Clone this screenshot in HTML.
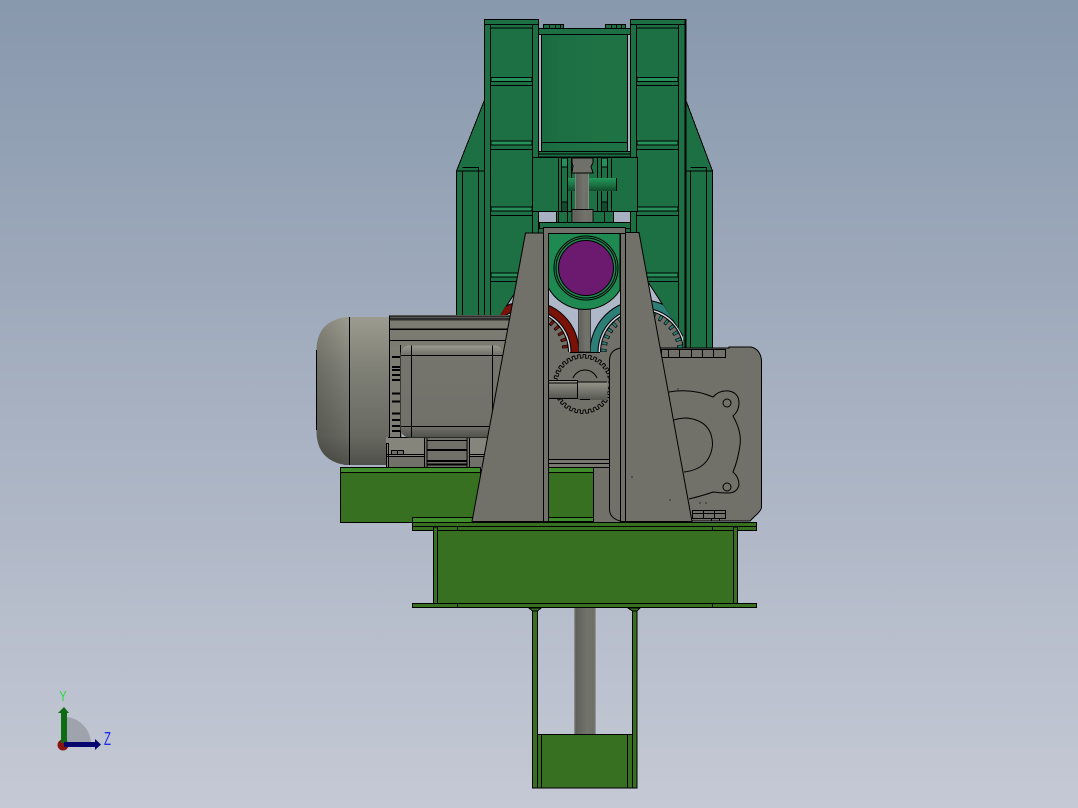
<!DOCTYPE html>
<html><head><meta charset="utf-8"><style>
html,body{margin:0;padding:0;width:1078px;height:808px;overflow:hidden;background:#a5aebf}
svg{display:block}
.k{stroke:#000;stroke-width:1;fill:none}
.g{fill:#1d7043;stroke:#000;stroke-width:1}
.l{fill:#25905a;stroke:#000;stroke-width:1}
.b{fill:#387022;stroke:#000;stroke-width:1.2}
.bl{fill:#3f8c2a;stroke:#000;stroke-width:1}
.s{fill:#71716a;stroke:#000;stroke-width:1}
text{font-family:"Liberation Sans",sans-serif}
</style></head><body>
<svg width="1078" height="808" viewBox="0 0 1078 808" xmlns="http://www.w3.org/2000/svg">
<defs>
<linearGradient id="bg" x1="0" y1="0" x2="0" y2="1"><stop offset="0" stop-color="#8898ad"/><stop offset="1" stop-color="#c5c9d5"/></linearGradient>
<linearGradient id="shaft" x1="0" y1="0" x2="1" y2="0"><stop offset="0" stop-color="#9a9c9c"/><stop offset=".08" stop-color="#5f605a"/><stop offset=".6" stop-color="#72736b"/><stop offset=".93" stop-color="#6e6f68"/><stop offset="1" stop-color="#a4a7ac"/></linearGradient>
<linearGradient id="hsh" x1="0" y1="0" x2="0" y2="1"><stop offset="0" stop-color="#95958a"/><stop offset=".5" stop-color="#75766e"/><stop offset="1" stop-color="#55564f"/></linearGradient>
<linearGradient id="fan" x1="0" y1="0" x2="0" y2="1"><stop offset="0" stop-color="#9c9b8f"/><stop offset=".35" stop-color="#7f8076"/><stop offset=".8" stop-color="#686961"/><stop offset="1" stop-color="#4f504a"/></linearGradient>
<linearGradient id="fanl" x1="0" y1="0" x2="1" y2="0"><stop offset="0" stop-color="#000" stop-opacity=".16"/><stop offset=".45" stop-color="#000" stop-opacity="0"/></linearGradient>
<linearGradient id="box" x1="0" y1="0" x2="0" y2="1"><stop offset="0" stop-color="#9a9a8e"/><stop offset=".09" stop-color="#75756e"/><stop offset=".88" stop-color="#71716a"/><stop offset="1" stop-color="#4f504a"/></linearGradient>
<linearGradient id="cyl" x1="0" y1="0" x2="1" y2="0"><stop offset="0" stop-color="#1a6a3e"/><stop offset=".25" stop-color="#1d7043"/><stop offset="1" stop-color="#1e7345"/></linearGradient>
<linearGradient id="pin" x1="0" y1="0" x2="0" y2="1"><stop offset="0" stop-color="#239a5a"/><stop offset=".55" stop-color="#1c7042"/><stop offset="1" stop-color="#0f4a2b"/></linearGradient>
<clipPath id="sk"><polygon points="522,282 487,335 487,352 683,352 683,335 648,282"/></clipPath>
</defs>
<rect width="1078" height="808" fill="url(#bg)"/>

<!-- wings and back wall -->
<g shape-rendering="crispEdges">
<polygon class="g" points="484.500,100 456.500,171 456.500,340 712.500,349.500 712.500,171 686.500,102"/>
<path class="k" d="M462.500 171V340M478.500 171V340M462.500 167.500H478.500V171M690.500 171V349M706.500 171V349M690.500 167.500H706.500V171M456.500 171H484M686 171H712.500"/>
<!-- columns -->
<rect class="g" x="484.500" y="19.500" width="54" height="330"/>
<rect class="g" x="630.500" y="19.500" width="55" height="330"/>
<path class="k" d="M484.500 24.500H538.500M630.500 24.500H685.500M490.500 24.500V350M532.500 24.500V350M636.500 24.500V350M678.500 24.500V350"/>
<path stroke="#000" stroke-width="2" d="M685.500 19V350" fill="none"/>
<!-- cross bars -->
<path class="k" d="M491 28H532M637 28H678"/>
<rect class="l" x="491" y="77.500" width="41" height="4"/><path class="k" d="M491 85.500H532"/>
<rect class="l" x="491" y="141" width="41" height="4"/><path class="k" d="M491 149.500H532"/>
<rect class="l" x="491" y="207" width="41" height="4"/><path class="k" d="M491 215.500H532"/>
<rect class="l" x="491" y="273" width="41" height="4"/><path class="k" d="M491 281.500H532"/>
<rect class="l" x="637" y="77.500" width="41" height="4"/><path class="k" d="M637 85.500H678"/>
<rect class="l" x="637" y="141" width="41" height="4"/><path class="k" d="M637 149.500H678"/>
<rect class="l" x="637" y="207" width="41" height="4"/><path class="k" d="M637 215.500H678"/>
<rect class="l" x="637" y="273" width="41" height="4"/><path class="k" d="M637 281.500H678"/>
<!-- top bolts -->
<rect class="g" x="543.500" y="24.500" width="20" height="4"/><rect class="g" x="605.500" y="24.500" width="20" height="4"/>
<path class="k" d="M549.500 24.500V28M555.500 24.500V28M560.500 24.500V28M611.500 24.500V28M616.500 24.500V28M621.500 24.500V28"/>
<!-- centre cylinder -->
<rect x="539" y="34" width="91" height="120" fill="#a9b3c2"/>
<rect x="541" y="34" width="87" height="118" fill="url(#cyl)"/>
<path class="k" d="M541.500 34V151M627.500 34V151M541 142.500H628"/>
<rect class="g" x="538.500" y="28.500" width="92" height="6"/>
<rect class="g" x="538.500" y="151.500" width="92" height="5.500"/>
<path class="k" d="M538.500 154H630.500"/>
<!-- clevis -->
<rect class="g" x="532.500" y="157.500" width="105" height="54"/>
<path class="k" d="M558.500 157.500V211M561.500 157.500V211M611.500 157.500V211M597.500 157.500V211"/>
<rect class="l" x="561.500" y="158" width="6" height="9"/>
<rect class="g" x="561.500" y="167" width="6" height="35"/>
<rect x="561.500" y="202" width="6" height="9.500" fill="#124e2e" stroke="#000"/>
<rect class="l" x="601.500" y="158" width="6" height="9"/>
<rect class="g" x="601.500" y="167" width="6" height="35"/>
<rect x="601.500" y="202" width="6" height="9.500" fill="#124e2e" stroke="#000"/>
<path class="k" d="M571.500 158V211"/>
<rect x="568" y="178" width="49" height="13" fill="url(#pin)"/>
<path class="k" d="M616.500 178V191"/>
<rect x="575" y="173" width="14" height="37" fill="url(#shaft)"/>
<path d="M572 158H593V163L591 166.500L593 173H572L573 166L572 163Z" fill="#6f706a" stroke="#000"/>
<path d="M572 157.500H593" stroke="#000" stroke-width="2"/>
<rect x="572" y="209.500" width="21" height="20" fill="url(#shaft)" stroke="#000"/>
<!-- gap below clevis -->
<rect x="539" y="212" width="17.500" height="10" fill="#a7b1c1"/>
<rect x="613.500" y="212" width="17" height="10" fill="#a7b1c1"/>
<path class="k" d="M556.500 211V222M558.500 211V222M567.500 211V222M604.500 211V222M613.500 211V222M538.500 211V222M630.500 211V222"/>
<rect class="g" x="539.500" y="222.500" width="91" height="6"/>
</g>

<!-- sky wedge behind gears -->
<polygon points="522,282 487,335 487,352 683,352 683,335 648,282" fill="#aeb8c8"/>
<path class="k" d="M648 282L683 336M522 282L487 336"/>

<!-- ring gears -->
<g clip-path="url(#sk)">
<circle cx="528" cy="352" r="41.500" fill="#71716a"/>
<circle cx="528" cy="352" r="47" fill="none" stroke="#7a1208" stroke-width="8"/>
<circle cx="528" cy="352" r="51" class="k"/><circle cx="528" cy="352" r="43" class="k"/>
<circle cx="528" cy="352" r="41.500" fill="none" stroke="#d5d9e0" stroke-width="1.200"/>
<circle cx="528" cy="352" r="40.500" class="k" stroke-width=".8"/>
<circle cx="528" cy="352" r="37.500" fill="none" stroke="#000" stroke-width="6" stroke-dasharray="4.500 5.500" pathLength="340"/>
<circle cx="528" cy="352" r="37.500" fill="none" stroke="#7a1208" stroke-width="4.500" stroke-dasharray="3 7" stroke-dashoffset="-.75" pathLength="340"/>
<circle cx="642" cy="352" r="41.500" fill="#71716a"/>
<circle cx="642" cy="352" r="48" fill="none" stroke="#2c7e76" stroke-width="8"/>
<circle cx="642" cy="352" r="52" class="k"/><circle cx="642" cy="352" r="44" class="k"/>
<circle cx="642" cy="352" r="42.500" fill="none" stroke="#d5d9e0" stroke-width="1.200"/>
<circle cx="642" cy="352" r="41.500" class="k" stroke-width=".8"/>
<circle cx="642" cy="352" r="38.500" fill="none" stroke="#000" stroke-width="6" stroke-dasharray="4.500 5.500" pathLength="340"/>
<circle cx="642" cy="352" r="38.500" fill="none" stroke="#2c7e76" stroke-width="4.500" stroke-dasharray="3 7" stroke-dashoffset="-.75" pathLength="340"/>
</g>
<rect x="578.500" y="300" width="12" height="52" fill="url(#shaft)" stroke="#000" stroke-width=".6"/>

<!-- frame window -->
<path d="M548 233H620V290A41.500 41.500 0 0 1 548 287Z" fill="#1e8a52" stroke="#000"/>
<circle cx="586" cy="268" r="32" fill="#1e8a52" stroke="#000"/>
<circle cx="586" cy="268" r="30" fill="#1e8a52" stroke="#000"/>
<circle cx="586" cy="268" r="27.500" fill="#6b1a70" stroke="#000"/>

<!-- centre block -->
<rect x="548" y="352" width="74" height="170" fill="#71716a"/>
<path class="k" d="M570 352.500H600"/>
<rect x="594" y="467" width="27" height="55" fill="#71716a"/>

<!-- pinion -->
<g fill="none" stroke="#000" stroke-width=".9">
<circle cx="583" cy="384" r="29.500" pathLength="320" stroke-dasharray="5 5"/>
<circle cx="583" cy="384" r="26" pathLength="320" stroke-dasharray="5 5" stroke-dashoffset="-5"/>
<circle cx="583" cy="384" r="27.750" pathLength="320" stroke-width="3.500" stroke-dasharray="1.700 3.300" stroke-dashoffset=".85"/>
</g>
<path class="k" d="M573 378A13 13 0 0 1 597 378"/>
<!-- shaft -->
<rect x="548.500" y="380.500" width="29" height="18" fill="url(#hsh)" stroke="#000"/>
<path class="k" d="M549 383H577"/>
<rect x="577.500" y="382" width="30" height="18" fill="url(#hsh)"/>
<path class="k" d="M577.500 398.500V382H607M580 399.500H590"/>
<g shape-rendering="crispEdges">
<rect x="549" y="459" width="60" height="8" fill="#77776f"/>
<path class="k" d="M549 459.500H609M549 463.500H609M549 467.500H610"/>
</g>

<!-- gearbox -->
<path class="s" d="M609.500 510V360Q610 349 622 348H729V347H751Q760 349 761.500 360V508Q760 512 755 516L750 521H620Q610 518 609.500 510Z"/>
<g shape-rendering="crispEdges">
<rect class="s" x="661.500" y="349.500" width="64" height="8"/>
<path class="k" d="M668.500 350V357M679.500 350V357M691.500 350V357M702.500 350V357M713.500 350V357"/>
<rect class="s" x="692.500" y="510.500" width="33" height="8"/>
<path class="k" d="M692.500 513.500H725.500M703.500 510.500V518M714.500 510.500V518M711.500 518V521M719.500 518V521"/>
</g>
<!-- flange outline -->
<path class="k" d="M669 392Q692 388 713 397Q719 390 729 391Q739 393 739 403Q739 411 733 416Q742 432 740 445Q738 460 733 472Q739 477 739 485Q737 493 728 493Q720 493 713 492Q705 495 689 499"/>
<circle cx="727" cy="403" r="4" class="k"/>
<circle cx="727" cy="487" r="4" class="k"/>
<path class="k" d="M674 420Q680 418 687 418Q712.500 421 712.500 445Q710 469 684 472"/>
<circle cx="678" cy="389" r=".6" fill="#000"/><circle cx="700" cy="503" r=".6" fill="#000"/><circle cx="706" cy="503" r=".6" fill="#000"/>

<!-- motor body -->
<g shape-rendering="crispEdges">
<rect x="389" y="315" width="123" height="35" fill="#7b7b72"/>
<rect x="389" y="315.500" width="123" height="5" fill="#2d2d2c"/>
<path d="M389 317.500H512" stroke="#555" stroke-width="1"/>
<path d="M389 329H512" stroke="#000" stroke-width="1.500"/>
<path d="M389 340.500H512" stroke="#000"/>
<rect x="389" y="345" width="13" height="92" fill="#7d7d73"/>
<path d="M392 357H400M392 367H400M392 370H400M392 375H400M392 380H400M392 393.500H400M392 401.500H400M392 413.500H400M392 420H400M392 426H400M392 431H400" stroke="#000" stroke-width="2"/>
<path class="k" d="M389.500 316V465M400.500 345V437"/>
</g>
<!-- fan cover -->
<path d="M389 317H348Q317 320 316.500 350V432Q317 460 345 465H389Z" fill="url(#fan)"/>
<path d="M389 317H348Q317 320 316.500 350V432Q317 460 345 465H389Z" fill="url(#fanl)"/>
<path class="k" d="M349.500 317V465M389.500 317V465"/>
<path class="k" d="M316.500 350V430"/>
<!-- motor foot -->
<g shape-rendering="crispEdges">
<rect x="386" y="437" width="105" height="30" fill="#85857b"/>
<rect x="388" y="457" width="36" height="10" fill="#71716a"/>
<rect x="470" y="457" width="20" height="10" fill="#71716a"/>
<path class="k" d="M386.500 443V467M388.500 443V467M386 454.500H425M386 456.500H425M468 454.500H490M468 456.500H490M388 437.500H490M386 443.500H388"/>
<rect class="s" x="391.500" y="450.500" width="6" height="4"/><rect class="s" x="397.500" y="450.500" width="6" height="4"/>
<rect x="424.500" y="437.500" width="45" height="30" fill="#71716a" stroke="#000"/>
<path class="k" d="M427 437.500V467M467 437.500V467M427 440.500H467"/>
<path d="M427 450H467M427 461H467M427 464.500H467" stroke="#000" stroke-width="1.800"/>
</g>
<!-- terminal box -->
<rect x="400.500" y="345.500" width="103" height="92" rx="9" fill="url(#box)"/>
<path class="k" d="M401 355.500H503M411.500 345.500V437M492.500 345.500V437M401 426.500H503"/>

<!-- green base -->
<g shape-rendering="crispEdges">
<rect class="b" x="340.500" y="467.500" width="140" height="55"/>
<rect class="bl" x="340.500" y="467.500" width="140" height="5"/>
<rect class="b" x="548.500" y="467.500" width="45" height="54"/>
<rect class="bl" x="548.500" y="467.500" width="45" height="5"/>
<rect class="bl" x="548.500" y="517.500" width="45" height="4"/>
<rect class="bl" x="412.500" y="517.500" width="70" height="5"/>
</g>

<!-- big gray tapered frame -->
<polygon class="s" points="525.500,233 543.500,233 543.500,521.500 472,521.500"/>
<polygon class="s" points="625,232.500 639,232.500 692,521.500 625,521.500"/>
<g shape-rendering="crispEdges">
<path class="s" d="M543.500 227.500H625.500V233.500H548.500V521.500H543.500Z"/>
<rect class="s" x="620.500" y="233.500" width="5" height="288"/>
</g>
<circle cx="632" cy="477" r=".6" fill="#000"/><circle cx="670" cy="500" r=".6" fill="#000"/>

<!-- main base -->
<g shape-rendering="crispEdges">
<rect class="b" x="412.500" y="522.500" width="344" height="4"/>
<rect class="b" x="412.500" y="526.500" width="344" height="4"/>
<rect class="b" x="433.500" y="527" width="4" height="77"/>
<rect class="b" x="733.500" y="527" width="4" height="77"/>
<rect class="b" x="437.500" y="530.500" width="296" height="73"/>
<rect class="b" x="412.500" y="603.500" width="344" height="4"/>
<path class="k" d="M457.500 526.500V530M712.500 526.500V530M457.500 604V607M712.500 604V607"/>
<!-- lower shaft and legs -->
<rect x="574" y="608" width="22" height="126" fill="url(#shaft)"/>
<rect class="b" x="532.500" y="608" width="5" height="180"/>
<rect class="b" x="632.500" y="608" width="4.500" height="180"/>
<polygon fill="#387022" stroke="#000" points="529,608 541,608 537.500,611 532.500,611"/>
<polygon fill="#387022" stroke="#000" points="628,608 640,608 637,611 632.500,611"/>
<rect class="b" x="537.500" y="734.500" width="95" height="53.500"/>
<path class="k" d="M541.500 734.500V788M627.500 734.500V788"/>
</g>

<!-- triad -->
<path d="M66 717A27 27 0 0 1 91 743H66Z" fill="#9fa3ad"/>
<circle cx="63" cy="745" r="5.500" fill="#8a1414"/>
<rect x="61" y="713" width="6" height="30" fill="#0f6a14"/>
<polygon points="58,713 64,707 69,713" fill="#0f6a14"/>
<rect x="64" y="742" width="32" height="5" fill="#06066e"/>
<polygon points="95,739 101,744.500 95,750" fill="#06066e"/>
<text x="59.500" y="701" font-size="15" fill="#22dd33" textLength="7" lengthAdjust="spacingAndGlyphs">Y</text>
<text x="104" y="745" font-size="18" fill="#1a2aee" textLength="7" lengthAdjust="spacingAndGlyphs">Z</text>
</svg>
</body></html>
